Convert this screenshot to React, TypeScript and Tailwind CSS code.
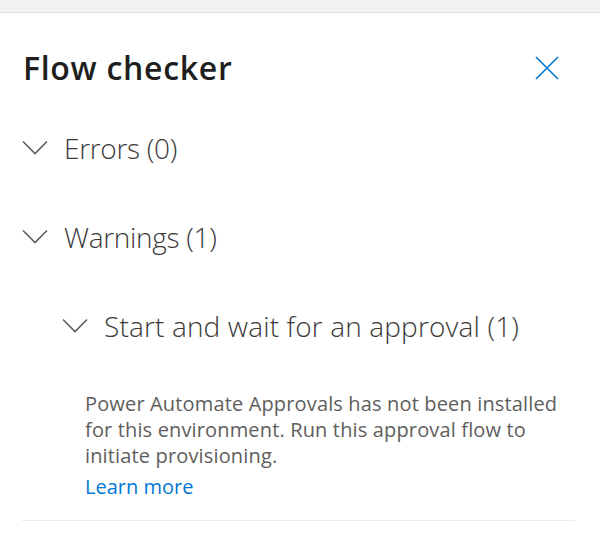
import React from "react";

function Chevron() {
  return (
    <svg width="26" height="16" viewBox="0 0 26 16" fill="none" className="shrink-0">
      <path d="M1 1.5 L13 13.5 L25 1.5" stroke="#605e5c" strokeWidth="1.6" />
    </svg>
  );
}

function Section({ label, indent }: { label: string; indent?: boolean }) {
  return (
    <div className={`flex h-[44px] items-center gap-[16px] ${indent ? "pl-[40px]" : ""}`}>
      <Chevron />
      <span
        className={`text-[28px] font-light text-[#3b3a39] ${
          indent ? "tracking-[0.15px]" : "tracking-[-0.3px]"
        }`}
      >
        {label}
      </span>
    </div>
  );
}

export default function App() {
  return (
    <div
      className="h-[537px] w-[600px] overflow-hidden bg-white"
      style={{ fontFamily: '"Open Sans", "Noto Sans", sans-serif' }}
    >
      <div className="h-[13px] border-b border-[#e1dfdd] bg-[#f3f2f1]" />
      <div className="pl-[22px] pr-[25px]">
        <div className="flex h-[108px] items-center justify-between pt-[2px]">
          <h1 className="pl-[1px] text-[32px] font-semibold text-[#201f1e] tracking-[0.7px]">
            Flow checker
          </h1>
          <button aria-label="Close" className="mr-[16px]">
            <svg width="24" height="24" viewBox="0 0 24 24" fill="none">
              <path d="M1 1 L23 23 M23 1 L1 23" stroke="#0078d4" strokeWidth="1.6" />
            </svg>
          </button>
        </div>
        <div className="mt-[5px]">
          <Section label="Errors (0)" />
        </div>
        <div className="mt-[45px]">
          <Section label="Warnings (1)" />
        </div>
        <div className="mt-[45px]">
          <Section label="Start and wait for an approval (1)" indent />
        </div>
        <div className="border-b border-[#edebe9] pb-[19px] pl-[63px] pt-[43px]">
          <p className="text-[20px] leading-[26px] text-[#605e5c] tracking-[0.15px]">
            Power Automate Approvals has not been installed for this environment. Run this approval flow to initiate provisioning.
          </p>
          <a href="#" className="mt-[4px] block text-[20px] leading-[28px] text-[#0078d4]">
            Learn more
          </a>
        </div>
      </div>
    </div>
  );
}
